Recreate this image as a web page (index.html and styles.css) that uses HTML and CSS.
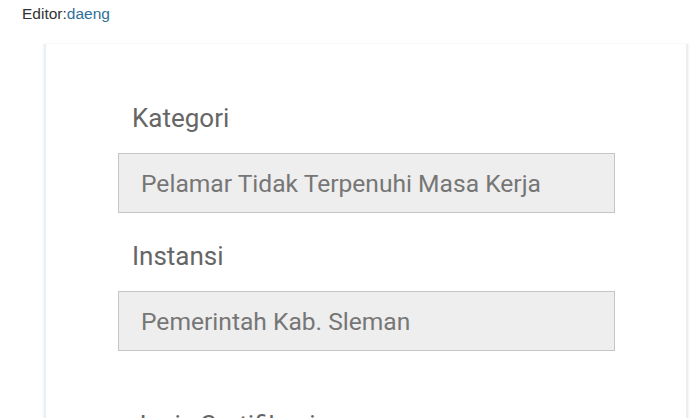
FILE: index.html
```html
<!DOCTYPE html>
<html lang="id">
<head>
    <meta charset="UTF-8">
    <meta name="viewport" content="width=device-width, initial-scale=1.0">
    <title>Detail Pelamar</title>
    <link rel="stylesheet" href="styles.css">
</head>
<body>
    <div class="editor">Editor:<span class="editor-name">daeng</span></div>

    <div class="card">
        <div class="field">
            <div class="field-label">Kategori</div>
            <div class="field-box">Pelamar Tidak Terpenuhi Masa Kerja</div>
        </div>
        <div class="field">
            <div class="field-label">Instansi</div>
            <div class="field-box">Pemerintah Kab. Sleman</div>
        </div>
        <div class="field field-next">
            <div class="field-label">Jenis Sertifikasi</div>
        </div>
    </div>
</body>
</html>
```

FILE: styles.css
```css
body {
    margin: 0;
    background-color: #fff;
    font-family: Roboto, "Noto Sans", sans-serif;
    overflow: hidden;
    height: 418px;
}
.editor {
    font-family: "Liberation Sans", Arial, sans-serif;
    font-size: 15.5px;
    color: #333;
    height: 44px;
    padding: 5px 0 0 22px;
    box-sizing: border-box;
    line-height: 18px;
}
.editor-name {
    color: #2f6f9a;
}
.card {
    margin-left: 44px;
    width: 644px;
    height: 374px;
    box-sizing: border-box;
    background-color: #fff;
    border-left: 2px solid #eceff2;
    border-right: 2px solid #eceff2;
    box-shadow: -1px 0 2px rgba(200, 215, 225, 0.25), 1px 0 2px rgba(200, 215, 225, 0.25);
    padding: 59px 0 0 72px;
}
.field {
    margin-bottom: 28px;
}
.field-label {
    font-size: 26px;
    line-height: 30px;
    color: #666;
    padding-left: 14px;
    margin-bottom: 20px;
}
.field-box {
    width: 497px;
    height: 60px;
    box-sizing: border-box;
    background-color: #eeeeee;
    border: 1.5px solid #c4c4c4;
    padding-left: 22px;
    display: flex;
    align-items: center;
    font-size: 24.6px;
    color: #767676;
}
.field-next {
    margin-top: 59px;
}
```
